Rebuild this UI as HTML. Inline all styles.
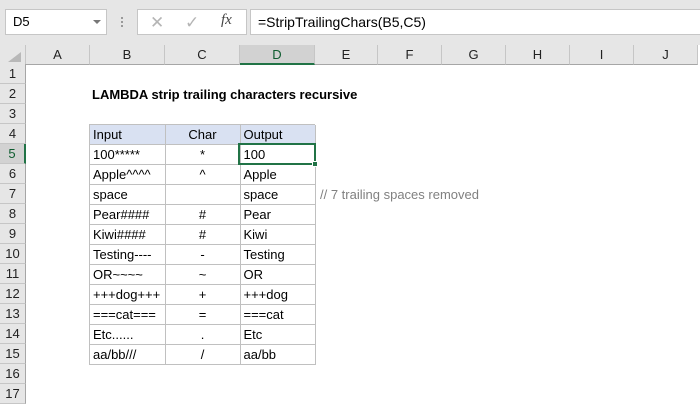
<!DOCTYPE html>
<html><head><meta charset="utf-8"><style>
*{margin:0;padding:0;box-sizing:border-box}
body{width:700px;height:400px;overflow:hidden;background:#fff;font-family:"Liberation Sans",sans-serif;font-size:13px;color:#000;position:relative}
.a{position:absolute}
.top{left:0;top:0;width:700px;height:45px;background:#e6e6e6}
.box{background:#fff;border:1px solid #c6c6c6}
.ch{top:45px;height:20px;background:#e6e6e6;border-right:1px solid #c6c6c6;border-bottom:1px solid #a6a6a6;text-align:center;line-height:19px;color:#222}
.rh{left:0;width:26px;height:20px;background:#e6e6e6;border-right:1px solid #a6a6a6;border-bottom:1px solid #c6c6c6;text-align:center;line-height:20px;color:#222}
.c{height:19px;line-height:19px;padding:0 0 0 3px;border-right:1px solid #c0c0c0;border-bottom:1px solid #c0c0c0;white-space:nowrap;overflow:hidden}
.ctr{text-align:center;padding-left:0}
</style></head><body>
<div class="a top"></div>
<div class="a box" style="left:5px;top:9px;width:102px;height:26px;line-height:24px;padding-left:7px">D5</div>
<div class="a" style="left:93px;top:20px;width:0;height:0;border-left:4px solid transparent;border-right:4px solid transparent;border-top:4px solid #777"></div>
<div class="a" style="left:121px;top:17px;width:2px;height:2px;background:#999;box-shadow:0 4px #999,0 8px #999"></div>
<div class="a box" style="left:137px;top:9px;width:110px;height:26px"></div>
<div class="a" style="left:150px;top:13px;color:#b5b5b5;font-size:17px">✕</div>
<div class="a" style="left:185px;top:13px;color:#b5b5b5;font-size:17px">✓</div>
<div class="a" style="left:221px;top:12px;font-family:'Liberation Serif',serif;font-style:italic;font-size:15px;color:#444">fx</div>
<div class="a box" style="left:250px;top:9px;width:452px;height:26px;line-height:24px;padding-left:7px;font-size:14px">=StripTrailingChars(B5,C5)</div>

<div class="a ch" style="left:0;width:26px"></div>
<div class="a" style="left:8px;top:52px;width:0;height:0;border-left:13px solid transparent;border-bottom:10px solid #b8b8b8"></div>
<div class="a ch" style="left:26px;width:64px">A</div>
<div class="a ch" style="left:90px;width:75px">B</div>
<div class="a ch" style="left:165px;width:75px">C</div>
<div class="a ch" style="left:240px;width:75px;background:#d2d2d2;border-bottom:2px solid #217346;color:#0e5c2f">D</div>
<div class="a ch" style="left:315px;width:63px">E</div>
<div class="a ch" style="left:378px;width:64px">F</div>
<div class="a ch" style="left:442px;width:64px">G</div>
<div class="a ch" style="left:506px;width:64px">H</div>
<div class="a ch" style="left:570px;width:64px">I</div>
<div class="a ch" style="left:634px;width:64px">J</div>

<div class="a rh" style="top:64px">1</div>
<div class="a rh" style="top:84px">2</div>
<div class="a rh" style="top:104px">3</div>
<div class="a rh" style="top:124px">4</div>
<div class="a rh" style="top:144px;background:#d2d2d2;border-right:2px solid #217346;color:#0e5c2f">5</div>
<div class="a rh" style="top:164px">6</div>
<div class="a rh" style="top:184px">7</div>
<div class="a rh" style="top:204px">8</div>
<div class="a rh" style="top:224px">9</div>
<div class="a rh" style="top:244px">10</div>
<div class="a rh" style="top:264px">11</div>
<div class="a rh" style="top:284px">12</div>
<div class="a rh" style="top:304px">13</div>
<div class="a rh" style="top:324px">14</div>
<div class="a rh" style="top:344px">15</div>
<div class="a rh" style="top:364px">16</div>
<div class="a rh" style="top:384px">17</div>

<div class="a" style="left:92px;top:87px;font-weight:bold;font-size:13px">LAMBDA strip trailing characters recursive</div>

<div class="a" style="left:89px;top:124px;width:226px;border-top:1px solid #c0c0c0;border-left:1px solid #c0c0c0">
<table style="border-collapse:collapse;table-layout:fixed;width:225px">
<colgroup><col style="width:75px"><col style="width:75px"><col style="width:75px"></colgroup>
<tr style="background:#d9e1f2"><td class="c">Input</td><td class="c ctr">Char</td><td class="c">Output</td></tr>
<tr><td class="c">100*****</td><td class="c ctr">*</td><td class="c">100</td></tr>
<tr><td class="c">Apple^^^^</td><td class="c ctr">^</td><td class="c">Apple</td></tr>
<tr><td class="c">space</td><td class="c ctr"></td><td class="c">space</td></tr>
<tr><td class="c">Pear####</td><td class="c ctr">#</td><td class="c">Pear</td></tr>
<tr><td class="c">Kiwi####</td><td class="c ctr">#</td><td class="c">Kiwi</td></tr>
<tr><td class="c">Testing----</td><td class="c ctr">-</td><td class="c">Testing</td></tr>
<tr><td class="c">OR~~~~</td><td class="c ctr">~</td><td class="c">OR</td></tr>
<tr><td class="c">+++dog+++</td><td class="c ctr">+</td><td class="c">+++dog</td></tr>
<tr><td class="c">===cat===</td><td class="c ctr">=</td><td class="c">===cat</td></tr>
<tr><td class="c">Etc......</td><td class="c ctr">.</td><td class="c">Etc</td></tr>
<tr><td class="c">aa/bb///</td><td class="c ctr">/</td><td class="c">aa/bb</td></tr>
</table></div>
<div class="a" style="left:238px;top:143px;width:78px;height:22px;border:2px solid #217346"></div>
<div class="a" style="left:312px;top:161px;width:6px;height:6px;background:#217346;border:1px solid #fff"></div>
<div class="a" style="left:320px;top:187px;color:#808080">// 7 trailing spaces removed</div>
</body></html>
